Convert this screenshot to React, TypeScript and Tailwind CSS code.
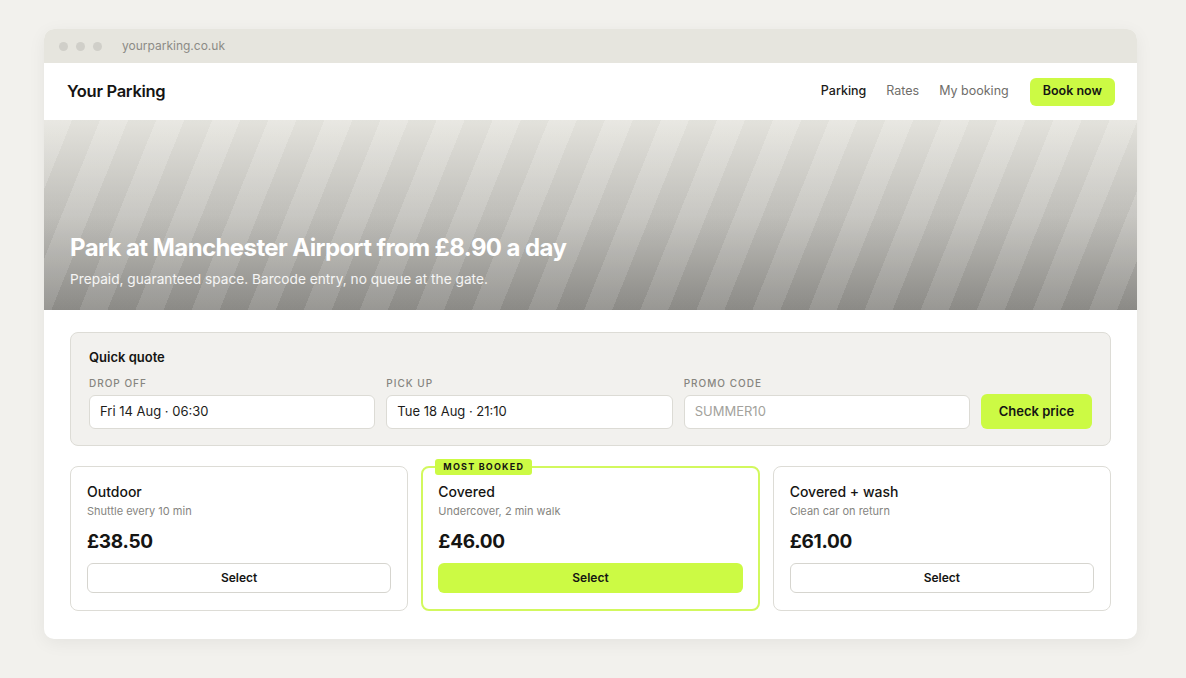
import React from "react";

const cards = [
  { title: "Outdoor", sub: "Shuttle every 10 min", price: "£38.50", featured: false },
  { title: "Covered", sub: "Undercover, 2 min walk", price: "£46.00", featured: true },
  { title: "Covered + wash", sub: "Clean car on return", price: "£61.00", featured: false },
];

export default function App() {
  return (
    <div className="min-h-[678px] w-full bg-[#f2f1ed] pt-[29px] px-[44px] pb-[39px] font-['Inter',sans-serif] text-[#1c1c1a]">
      <div className="w-[1093px] overflow-hidden rounded-[10px] bg-white shadow-[0_4px_18px_rgba(0,0,0,0.06)]">
        {/* title bar */}
        <div className="flex h-[34px] items-center bg-[#e6e5de] pl-[15px]">
          <div className="flex gap-[8px]">
            <span className="h-[9px] w-[9px] rounded-full bg-[#d0cfc9]" />
            <span className="h-[9px] w-[9px] rounded-full bg-[#d0cfc9]" />
            <span className="h-[9px] w-[9px] rounded-full bg-[#d0cfc9]" />
          </div>
          <span className="ml-[20px] text-[12px] text-[#8c8b86]">yourparking.co.uk</span>
        </div>
        {/* nav */}
        <div className="flex h-[57px] items-center justify-between pl-[23px] pr-[22px]">
          <span className="text-[16.5px] font-semibold tracking-[-0.3px] text-[#151513]">Your Parking</span>
          <div className="flex items-center text-[12.5px]">
            <span className="font-medium text-[#1c1c1a]">Parking</span>
            <span className="ml-[20px] text-[#6f6e6a]">Rates</span>
            <span className="ml-[20px] text-[#6f6e6a]">My booking</span>
            <button className="ml-[21px] h-[28px] rounded-[6px] bg-[#ccfa44] px-[13px] text-[12.5px] font-semibold text-[#151513]">
              Book now
            </button>
          </div>
        </div>
        {/* hero */}
        <div className="relative h-[190px] overflow-hidden bg-gradient-to-b from-[#e7e6e0] via-[#c3c2bd] to-[#8e8d89]">
          <div className="absolute inset-0 bg-[repeating-linear-gradient(112deg,rgba(255,255,255,0.09)_0px,rgba(255,255,255,0.09)_26px,rgba(0,0,0,0.02)_26px,rgba(0,0,0,0.02)_52px)]" />
          <div className="relative flex h-full flex-col justify-end pb-[22px] pl-[26px]">
            <h1 className="text-[24px] font-bold leading-[30px] tracking-[-0.6px] text-white">
              Park at Manchester Airport from £8.90 a day
            </h1>
            <p className="mt-[7px] text-[13.7px] leading-[18px] text-white/90">
              Prepaid, guaranteed space. Barcode entry, no queue at the gate.
            </p>
          </div>
        </div>
        {/* content */}
        <div className="px-[26px] pt-[22px] pb-[28px]">
          <div className="rounded-[8px] border border-[#dddcd6] bg-[#f2f1ee] px-[18px] pt-[15px] pb-[16px]">
            <div className="text-[13px] font-semibold leading-[18px] text-[#151513]">Quick quote</div>
            <div className="mt-[11px] flex items-end gap-[11px]">
              {[
                { label: "DROP OFF", value: "Fri 14 Aug · 06:30", ph: false },
                { label: "PICK UP", value: "Tue 18 Aug · 21:10", ph: false },
                { label: "PROMO CODE", value: "SUMMER10", ph: true },
              ].map((f) => (
                <div key={f.label} className="flex flex-1 flex-col">
                  <span className="text-[10px] font-medium leading-[12px] tracking-[1px] text-[#86857f]">{f.label}</span>
                  <div
                    className={`mt-[6px] flex h-[34px] items-center rounded-[6px] border border-[#dcdbd5] bg-white px-[10px] text-[13px] ${
                      f.ph ? "text-[#a3a29c]" : "text-[#1c1c1a]"
                    }`}
                  >
                    {f.value}
                  </div>
                </div>
              ))}
              <button className="h-[35px] w-[111px] rounded-[6px] bg-[#ccfa44] text-[13px] font-semibold text-[#151513]">
                Check price
              </button>
            </div>
          </div>
          <div className="mt-[20px] grid grid-cols-3 gap-[13px]">
            {cards.map((c) => (
              <div
                key={c.title}
                className={`relative rounded-[8px] bg-white ${
                  c.featured ? "border-2 border-[#d2f85e] px-[15px] pt-[15px] pb-[16px]" : "border border-[#dddcd6] px-[16px] pt-[16px] pb-[17px]"
                }`}
              >
                {c.featured && (
                  <span className="absolute -top-[9px] left-[12px] rounded-[3px] bg-[#ccfa44] px-[8px] py-[2px] text-[9px] font-bold leading-[12px] tracking-[1.2px] text-[#151513]">
                    MOST BOOKED
                  </span>
                )}
                <div className="text-[14px] font-medium leading-[18px] text-[#151513]">{c.title}</div>
                <div className="mt-[2px] text-[11px] leading-[16px] text-[#86857f]">{c.sub}</div>
                <div className="mt-[11px] text-[19px] font-bold leading-[24px] tracking-[-0.3px] text-[#151513]">{c.price}</div>
                <button
                  className={`mt-[9px] h-[30px] w-full rounded-[6px] text-[12px] font-semibold text-[#151513] ${
                    c.featured ? "bg-[#ccfa44]" : "border border-[#d6d5cf] bg-white"
                  }`}
                >
                  Select
                </button>
              </div>
            ))}
          </div>
        </div>
      </div>
    </div>
  );
}
